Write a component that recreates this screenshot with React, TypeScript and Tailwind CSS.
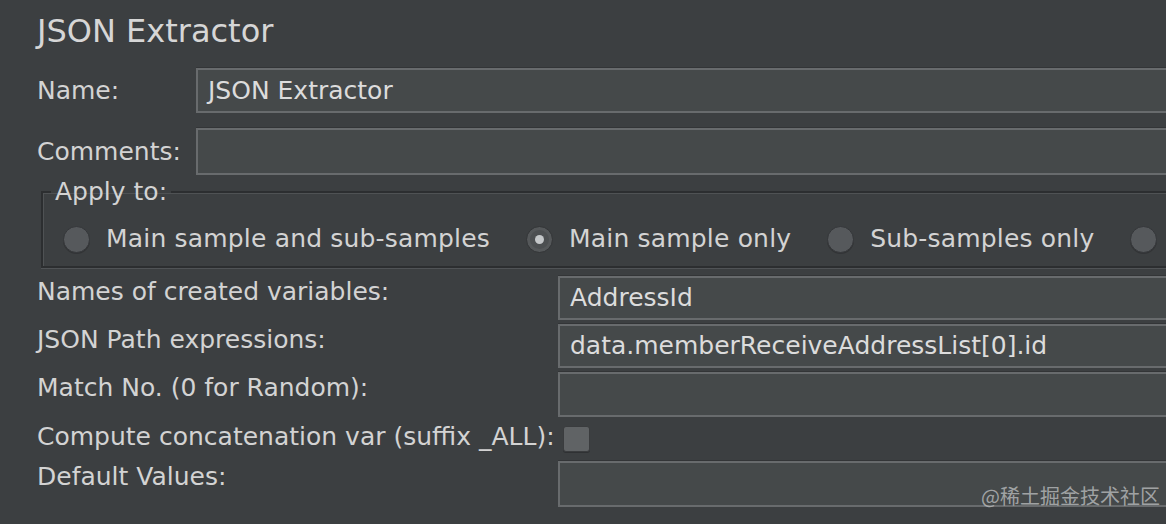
import React from 'react';

const Radio = ({ checked, label }: { checked?: boolean; label?: string }) => (
  <div className="flex items-center shrink-0">
    {checked ? (
      <span className="flex h-[27px] w-[27px] items-center justify-center rounded-full border border-[#343638] bg-[#4c4f51] shadow-[inset_0_0_0_3px_#55585a]">
        <span className="h-[9px] w-[9px] rounded-full bg-[#c4c7c9]" />
      </span>
    ) : (
      <span className="h-[27px] w-[27px] rounded-full border border-[#35373a] bg-[#56595c] shadow-[0_1px_0_#323436]" />
    )}
    {label && <span className="ml-[16px] whitespace-nowrap tracking-[0.18px]">{label}</span>}
  </div>
);

const Field = ({ value, className }: { value?: string; className: string }) => (
  <div
    className={`-mr-[20px] flex flex-1 items-center border-2 border-[#686b6d] bg-[#45494a] pl-[10px] text-[#dcdcdc] shadow-[0_-1px_0_#333537] ${className}`}
  >
    {value}
  </div>
);

export default function App() {
  return (
    <div className="relative h-[524px] w-[1166px] overflow-hidden bg-[#3c3f41] pl-[37px] font-['DejaVu_Sans',sans-serif] text-[25px] leading-[30px] text-[#d3d3d3]">
      {/* title */}
      <div className="flex h-[62px] items-center text-[32px] leading-[38px] text-[#d6d6d6]">JSON Extractor</div>

      <div className="mt-[6px] flex h-[45px] items-center">
        <div className="w-[159px] shrink-0">Name:</div>
        <Field value="JSON Extractor" className="h-[45px]" />
      </div>

      <div className="mt-[15px] flex h-[47px] items-center">
        <div className="w-[159px] shrink-0">Comments:</div>
        <Field className="h-[47px]" />
      </div>

      {/* Apply to group */}
      <fieldset className="ml-[4px] mt-[2px] w-[1200px] border-2 border-[#2c2e30] pb-[12px] pl-[8px] shadow-[inset_1px_1px_0_#4f5254,0_1px_0_#505356]">
        <legend className="px-[4px] leading-[30px]">Apply to:</legend>
        <div className="ml-[12px] mt-[17px] flex h-[30px] items-center gap-[36px]">
          <Radio label="Main sample and sub-samples" />
          <Radio checked label="Main sample only" />
          <Radio label="Sub-samples only" />
          <Radio />
        </div>
      </fieldset>

      {/* extractor settings */}
      <div className="mt-[8px] flex flex-col gap-[4px]">
        <div className="flex h-[44px] items-start">
          <div className="w-[521px] shrink-0 pt-px">Names of created variables:</div>
          <Field value="AddressId" className="h-[44px]" />
        </div>
        <div className="flex h-[44px] items-start">
          <div className="w-[521px] shrink-0 pt-px">JSON Path expressions:</div>
          <Field value="data.memberReceiveAddressList[0].id" className="h-[44px]" />
        </div>
        <div className="flex h-[45px] items-start">
          <div className="w-[521px] shrink-0 pt-px">Match No. (0 for Random):</div>
          <Field className="h-[45px]" />
        </div>
        <div className="flex h-[36px] items-start">
          <div className="w-[526px] shrink-0 pt-[1px] whitespace-nowrap">Compute concatenation var (suffix _ALL):</div>
          <span className="mt-[5px] h-[26px] w-[27px] rounded-[3px] border border-[#3a3c3e] bg-[#606365] shadow-[0_1px_0_#2f3133]" />
        </div>
        <div className="flex h-[46px] items-start">
          <div className="w-[521px] shrink-0 pt-px">Default Values:</div>
          <Field className="h-[46px]" />
        </div>
      </div>

      <div className="absolute bottom-[16px] right-[6px] font-['Noto_Sans_CJK_SC',sans-serif] text-[20px] leading-[24px] text-[#b9bbbd]/80">
        @稀土掘金技术社区
      </div>
    </div>
  );
}
